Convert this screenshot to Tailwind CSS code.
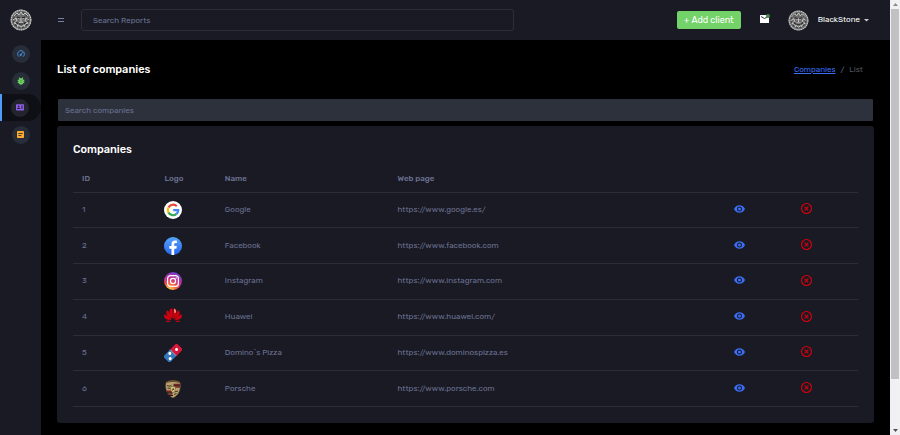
<!DOCTYPE html>
<html lang="en">
<head>
    <meta charset="UTF-8">
    <meta name="viewport" content="width=device-width, initial-scale=1.0">
    <title>List of companies</title>
    <script src="https://cdn.jsdelivr.net/npm/@tailwindcss/browser@4"></script>
</head>
<body class="flex min-h-screen bg-black font-['Rubik','Roboto',sans-serif] text-[8px] leading-[12px] text-[#6c7293]">
    <!-- Shared symbols -->
    <svg class="hidden">
        <symbol id="lion" viewBox="0 0 22 22">
            <circle cx="11" cy="11" r="10.5" fill="#6c6c6c"/>
            <circle cx="11" cy="11" r="9.8" fill="none" stroke="#c4c4c4" stroke-width="1.2" stroke-dasharray="1.700 .6"/>
            <circle cx="11" cy="11" r="7.4" fill="none" stroke="#3d3d3d" stroke-width="1.4" stroke-dasharray="2.300 1.700"/>
            <g fill="none" stroke="#d2d2d2" stroke-width=".9">
                <path d="M4 7l3-3 2 2 2-3 2 3 2-2 3 3M3 11l3-2 1 3-3 2 3 1 1 3M19 11l-3-2-1 3 3 2-3 1-1 3"/>
                <path d="M8 9l2 1M14 9l-2 1M11 9v4M9 13l2 1 2-1M8 16l3 2 3-2"/>
            </g>
            <path d="M7 8l3 1M15 8l-3 1M9 15h4M6 13l2 2M16 13l-2 2" stroke="#222" stroke-width="1.1"/>
        </symbol>
        <symbol id="eye" viewBox="1 4 22 16">
            <path fill="#3b6ef6" d="M12 9a3 3 0 1 0 0 6 3 3 0 0 0 0-6m0 8a5 5 0 1 1 0-10 5 5 0 0 1 0 10m0-12.500C7 4.500 2.700 7.600 1 12c1.700 4.400 6 7.500 11 7.500s9.300-3.100 11-7.500c-1.700-4.400-6-7.500-11-7.500"/>
        </symbol>
        <symbol id="remove" viewBox="2 2 20 20">
            <path fill="#d8000c" d="M12 20a8 8 0 1 1 0-16 8 8 0 0 1 0 16m0-18a10 10 0 1 0 0 20 10 10 0 0 0 0-20m2.600 6L12 10.600 9.400 8 8 9.400l2.600 2.600L8 14.600 9.400 16l2.600-2.600 2.600 2.600 1.400-1.400-2.600-2.600L16 9.400z"/>
        </symbol>
    </svg>

    <!-- Sidebar -->
    <nav class="flex w-[41px] shrink-0 flex-col bg-[#191a23]" aria-label="Main">
        <a href="#" class="flex h-10 items-center justify-center" aria-label="Home">
            <svg class="size-[22px]"><use href="#lion"/></svg>
        </a>
        <a href="#" class="flex h-[27px] items-center justify-center" aria-label="Dashboard">
            <span class="flex size-[18px] items-center justify-center rounded-full bg-[#282d3a]">
                <svg class="size-2" viewBox="0 0 24 24" fill="none" stroke="#4a90e2" stroke-width="3">
                    <path d="M6 20a10 10 0 1 1 12 0M11 15l6-8"/><circle cx="11" cy="15" r="2" fill="#4a90e2"/>
                </svg>
            </span>
        </a>
        <a href="#" class="flex h-[27px] items-center justify-center" aria-label="Reports">
            <span class="flex size-[18px] items-center justify-center rounded-full bg-[#282d3a]">
                <svg class="size-2" viewBox="0 0 24 24" fill="#6bcf5f">
                    <path d="M7 1l3 3h4l3-3 2 2-2 3 2 2h3v4h-2v2h2v4h-3c-1 3-3 5-7 5s-6-2-7-5H2v-4h2v-2H2V8h3l2-2-2-3z"/>
                    <path d="M10 11h4M10 16h4" stroke="#357a3c" stroke-width="2"/>
                </svg>
            </span>
        </a>
        <a href="#" class="flex h-[27px] items-center rounded-r-full border-l-2 border-[#4f9cf9] bg-[#0f1015] pl-[9px]" aria-label="Companies" aria-current="page">
            <span class="flex size-[18px] items-center justify-center rounded-full bg-[#22242e]">
                <svg class="h-[7px] w-2" viewBox="0 0 27 22">
                    <rect width="27" height="21" rx="2" fill="#8f5fe8"/>
                    <circle cx="9" cy="7" r="3" fill="#22242e"/>
                    <path d="M3 16c0-5 12-5 12 0zM17 5h7v3h-7zM17 11h7v3h-7z" fill="#22242e"/>
                </svg>
            </span>
        </a>
        <a href="#" class="flex h-[27px] items-center justify-center" aria-label="Notes">
            <span class="flex size-[18px] items-center justify-center rounded-full bg-[#282d3a]">
                <svg class="size-[7px]" viewBox="0 0 21 21">
                    <rect width="21" height="21" rx="2" fill="#ffab2d"/>
                    <path d="M4 6h13v3H4zM4 12h9v3H4z" fill="#4d402f"/>
                </svg>
            </span>
        </a>
    </nav>

    <div class="flex min-w-0 flex-1 flex-col">
        <!-- Top bar -->
        <header class="flex h-10 items-center bg-[#191a23] pr-[21px] pl-[17px]">
            <button type="button" aria-label="Toggle menu">
                <svg class="h-[4px] w-[6px]" viewBox="0 0 6 4"><path d="M0 .5h6M0 3.500h6" stroke="#7b81a3"/></svg>
            </button>
            <input type="search" aria-label="Search reports" placeholder="Search Reports" class="ml-[17px] h-[22px] w-[433px] rounded-[3px] border border-[#2c2e33] px-[11px] outline-none placeholder:text-[#6c7293]">
            <div class="ml-auto flex items-center text-white">
                <button type="button" class="h-[18px] w-16 rounded-[2px] bg-[#73d268] text-[9px]">+ Add client</button>
                <button type="button" class="relative ml-[19px]" aria-label="Messages">
                    <svg class="mb-[2px] block h-2 w-[9px]" viewBox="0 0 18 16"><rect width="18" height="16" rx="1" fill="#fff"/><path d="M2 3l7 4 7-4" fill="none" stroke="#191a23" stroke-width="1.800"/></svg>
                    <span class="absolute -top-px -right-px size-1 rounded-full bg-[#3c8b4a]"></span>
                </button>
                <button type="button" class="ml-[19px] flex items-center">
                    <svg class="size-[21px]"><use href="#lion"/></svg>
                    <span class="ml-[9px]">BlackStone</span>
                    <svg class="ml-1 h-[3px] w-[5px]" viewBox="0 0 5 3"><path d="M0 0h5L2.500 2.500z" fill="#ccc"/></svg>
                </button>
            </div>
        </header>

        <main class="flex-1 px-4 pt-[22px]">
            <div class="flex h-[15px] items-center justify-between pr-[11px]">
                <h1 class="text-[11px] leading-[15px] font-medium text-white">List of companies</h1>
                <nav class="flex gap-[5px]" aria-label="Breadcrumb">
                    <a href="#" class="text-[#3b6ef6] underline">Companies</a>
                    <span>/</span>
                    <span class="text-[#53555f]">List</span>
                </nav>
            </div>

            <div class="mt-[22px] px-px">
                <input type="search" aria-label="Search companies" placeholder="Search companies" class="block h-[22px] w-full rounded-[1px] bg-[#2d313c] px-[7px] outline-none placeholder:text-[#6c7293]">
            </div>

            <section class="mt-[5px] rounded-[3px] bg-[#191a23] px-4 pt-[17px] pb-4">
                <h2 class="text-[11px] leading-[14px] font-medium text-white">Companies</h2>
                <table class="mt-2 h-[242px] w-full table-fixed border-collapse text-left">
                    <colgroup>
                        <col class="w-[10.5%]">
                        <col class="w-[7.7%]">
                        <col class="w-[22%]">
                        <col>
                        <col class="w-[8.5%]">
                        <col class="w-[8.5%]">
                    </colgroup>
                    <thead>
                        <tr class="h-[27px] border-b border-[#2c2e37]">
                            <th class="px-[9px] pt-[2px] font-medium">ID</th>
                            <th class="px-[9px] pt-[2px] font-medium">Logo</th>
                            <th class="px-[9px] pt-[2px] font-medium">Name</th>
                            <th class="px-[9px] pt-[2px] font-medium">Web page</th>
                            <th aria-label="View"></th>
                            <th aria-label="Delete"></th>
                        </tr>
                    </thead>
                    <tbody>
                        <tr class="border-b border-[#2c2e37]">
                            <td class="px-[9px]">1</td>
                            <td class="px-[9px]">
                                <svg class="size-[18px]" viewBox="0 0 18 18">
                                    <circle cx="9" cy="9" r="9" fill="#fff"/>
                                    <g fill="none" stroke-width="2.200">
                                        <path d="M12.800 5.200A5.200 5.200 0 0 0 4.500 6.500" stroke="#ea4335"/>
                                        <path d="M4.500 6.500a5.200 5.200 0 0 0 0 5.100" stroke="#fbbc05"/>
                                        <path d="M4.500 11.600a5.200 5.200 0 0 0 8 1.300" stroke="#34a853"/>
                                        <path d="M12.500 12.900A5.200 5.200 0 0 0 14.200 9.200H9.200" stroke="#4285f4"/>
                                    </g>
                                </svg>
                            </td>
                            <td class="px-[9px]">Google</td>
                            <td class="px-[9px]">https://www.google.es/</td>
                            <td class="px-[9px] pb-[2px]"><button type="button" class="block" aria-label="View Google"><svg class="h-2 w-[11px]"><use href="#eye"/></svg></button></td>
                            <td class="px-[10px] pb-[2px]"><button type="button" class="block" aria-label="Delete Google"><svg class="size-[11px]"><use href="#remove"/></svg></button></td>
                        </tr>
                        <tr class="border-b border-[#2c2e37]">
                            <td class="px-[9px]">2</td>
                            <td class="px-[9px]">
                                <svg class="size-[18px]" viewBox="0 0 18 18">
                                    <linearGradient id="fb" x2="0" y2="1"><stop stop-color="#55a5fa"/><stop offset="1" stop-color="#2864ee"/></linearGradient>
                                    <circle cx="9" cy="9" r="9" fill="url(#fb)"/>
                                    <path d="M7.500 18v-6.300H5.300V9h2.200V7.200c0-2.500 1.300-3.700 3.400-3.700.7 0 1.400.1 2 .2v2.200h-1.200c-1.100 0-1.500.6-1.500 1.400V9h2.600l-.4 2.700h-2.200V18z" fill="#fff"/>
                                </svg>
                            </td>
                            <td class="px-[9px]">Facebook</td>
                            <td class="px-[9px]">https://www.facebook.com</td>
                            <td class="px-[9px] pb-[2px]"><button type="button" class="block" aria-label="View Facebook"><svg class="h-2 w-[11px]"><use href="#eye"/></svg></button></td>
                            <td class="px-[10px] pb-[2px]"><button type="button" class="block" aria-label="Delete Facebook"><svg class="size-[11px]"><use href="#remove"/></svg></button></td>
                        </tr>
                        <tr class="border-b border-[#2c2e37]">
                            <td class="px-[9px]">3</td>
                            <td class="px-[9px]">
                                <svg class="size-[18px]" viewBox="0 0 18 18">
                                    <radialGradient id="ig" cx=".3" cy="1.050" r="1.100"><stop offset=".1" stop-color="#fdc84b"/><stop offset=".4" stop-color="#f2573f"/><stop offset=".65" stop-color="#c32f94"/><stop offset="1" stop-color="#6b40d0"/></radialGradient>
                                    <circle cx="9" cy="9" r="9" fill="url(#ig)"/>
                                    <rect x="3.600" y="3.600" width="10.800" height="10.800" rx="3" fill="none" stroke="#fff" stroke-width="1.200"/>
                                    <circle cx="9" cy="9" r="2.600" fill="none" stroke="#fff" stroke-width="1.200"/>
                                    <circle cx="12.200" cy="5.900" r=".7" fill="#fff"/>
                                </svg>
                            </td>
                            <td class="px-[9px]">Instagram</td>
                            <td class="px-[9px]">https://www.instagram.com</td>
                            <td class="px-[9px] pb-[2px]"><button type="button" class="block" aria-label="View Instagram"><svg class="h-2 w-[11px]"><use href="#eye"/></svg></button></td>
                            <td class="px-[10px] pb-[2px]"><button type="button" class="block" aria-label="Delete Instagram"><svg class="size-[11px]"><use href="#remove"/></svg></button></td>
                        </tr>
                        <tr class="border-b border-[#2c2e37]">
                            <td class="px-[9px]">4</td>
                            <td class="px-[9px]">
                                <svg class="size-[18px]" viewBox="0 0 18 18">
                                    <g fill="#d3000f">
                                        <path d="M8.700 11C6 7.500 4.700 3.500 6.200 1.200 7 .3 8.300.2 8.300.2 9 4 8.900 7.500 8.700 11z"/>
                                        <path d="M9.300 11C12 7.500 13.300 3.500 11.800 1.200 11 .3 9.700.2 9.700.2 9 4 9.100 7.500 9.300 11z"/>
                                        <path d="M7.900 11.300C4 9.300 2 6.500 2.300 4c.3-1 1.500-1.800 1.500-1.800C5.500 4.500 7.200 8 7.900 11.300z"/>
                                        <path d="M10.100 11.300c3.900-2 5.900-4.800 5.600-7.300-.3-1-1.500-1.800-1.500-1.800C12.500 4.500 10.800 8 10.100 11.300z"/>
                                        <path d="M7.400 12C3 12.300.7 10.800.1 8.800 0 7.500.5 6.300.5 6.300 3 7.500 6 9.700 7.400 12z"/>
                                        <path d="M10.600 12c4.400.3 6.700-1.200 7.300-3.200.1-1.300-.4-2.500-.4-2.500C15 7.500 12 9.700 10.600 12z"/>
                                        <path d="M7.300 12.700H1.800c1 1.800 3.300 1.700 5.500 0zM10.700 12.700h5.500c-1 1.800-3.300 1.700-5.500 0z"/>
                                    </g>
                                    <path d="M10 .8c1.700.5 2.300 2.200 1.700 4L10.400 5z" fill="#f3a795"/>
                                </svg>
                            </td>
                            <td class="px-[9px]">Huawei</td>
                            <td class="px-[9px]">https://www.huawei.com/</td>
                            <td class="px-[9px] pb-[2px]"><button type="button" class="block" aria-label="View Huawei"><svg class="h-2 w-[11px]"><use href="#eye"/></svg></button></td>
                            <td class="px-[10px] pb-[2px]"><button type="button" class="block" aria-label="Delete Huawei"><svg class="size-[11px]"><use href="#remove"/></svg></button></td>
                        </tr>
                        <tr class="border-b border-[#2c2e37]">
                            <td class="px-[9px]">5</td>
                            <td class="px-[9px]">
                                <svg class="size-[18px]" viewBox="0 0 18 18">
                                    <g transform="rotate(45 9 9)">
                                        <rect x="4.500" y="-.5" width="9" height="9" rx=".6" fill="#d8163a"/>
                                        <rect x="4.500" y="9" width="9" height="9.500" rx=".6" fill="#3478bd"/>
                                        <path d="M4.500 8.700h9" stroke="#dce6f0" stroke-width=".7"/>
                                        <circle cx="9" cy="4" r="1.500" fill="#fff"/>
                                        <circle cx="7" cy="11.500" r="1.500" fill="#fff"/>
                                        <circle cx="11" cy="15" r="1.500" fill="#fff"/>
                                    </g>
                                </svg>
                            </td>
                            <td class="px-[9px]">Domino`s Pizza</td>
                            <td class="px-[9px]">https://www.dominospizza.es</td>
                            <td class="px-[9px] pb-[2px]"><button type="button" class="block" aria-label="View Domino`s Pizza"><svg class="h-2 w-[11px]"><use href="#eye"/></svg></button></td>
                            <td class="px-[10px] pb-[2px]"><button type="button" class="block" aria-label="Delete Domino`s Pizza"><svg class="size-[11px]"><use href="#remove"/></svg></button></td>
                        </tr>
                        <tr class="border-b border-[#2c2e37]">
                            <td class="px-[9px]">6</td>
                            <td class="px-[9px]">
                                <svg class="size-[18px]" viewBox="0 0 18 18">
                                    <path d="M2 2.500C4-.3 14-.3 16 2.500c1.300 6-.8 12.500-7 15.500C2.800 15 .7 8.500 2 2.500z" fill="#b9a273" stroke="#5a4328" stroke-width=".6"/>
                                    <path d="M3 2.500c3-1.500 9-1.500 12 0" fill="none" stroke="#6b512e" stroke-width="1.200"/>
                                    <path d="M9.500 4.500H16M9.500 7H16M2.500 11.300h6M4 14h4.500" stroke="#7d2323" stroke-width="1.500"/>
                                    <path d="M9.500 5.700H16M3 12.700h5.500M5 15.500h4" stroke="#221a16"/>
                                    <path d="M3 5.500l3 .8 1.500-1.500M3.500 8l3 .5M10.500 12l3.500-1M10 14.500l2.500-1" fill="none" stroke="#473621"/>
                                    <path d="M6.800 6.500h4.400v3c0 1.600-1 2.400-2.200 3-1.200-.6-2.200-1.400-2.200-3z" fill="#e6cf86" stroke="#55401f" stroke-width=".5"/>
                                    <path d="M8 11l1-3.500 1 2z" fill="#17130f"/>
                                </svg>
                            </td>
                            <td class="px-[9px]">Porsche</td>
                            <td class="px-[9px]">https://www.porsche.com</td>
                            <td class="px-[9px] pb-[2px]"><button type="button" class="block" aria-label="View Porsche"><svg class="h-2 w-[11px]"><use href="#eye"/></svg></button></td>
                            <td class="px-[10px] pb-[2px]"><button type="button" class="block" aria-label="Delete Porsche"><svg class="size-[11px]"><use href="#remove"/></svg></button></td>
                        </tr>
                    </tbody>
                </table>
            </section>
        </main>
    </div>

    <!-- Scroll track -->
    <div class="flex w-[10px] shrink-0 flex-col items-center bg-[#f1f1f3]" aria-hidden="true">
        <svg class="h-[9px] w-[5px]" viewBox="0 0 5 9"><path d="M0 6l2.500-3L5 6z" fill="#8a8a8e"/></svg>
        <div class="h-[370px] w-2 bg-[#c1c1c3]"></div>
        <svg class="mt-auto h-[9px] w-[5px]" viewBox="0 0 5 9"><path d="M0 3l2.500 3L5 3z" fill="#505055"/></svg>
    </div>
</body>
</html>
